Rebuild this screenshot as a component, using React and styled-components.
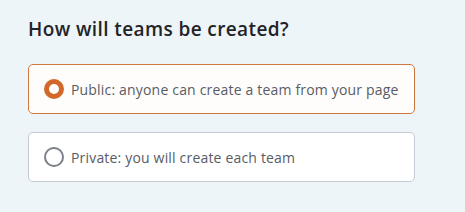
import React, { useState } from 'react';
import styled, { createGlobalStyle } from 'styled-components';

const GlobalStyle = createGlobalStyle`
  html, body {
    margin: 0;
    padding: 0;
    background: #eef5f8;
    font-family: "Open Sans", "Liberation Sans", sans-serif;
  }
`;

const Wrapper = styled.div`
  padding: 15px 50px 0 28px;
`;

const Heading = styled.h2`
  margin: 0 0 21px;
  font-size: 19px;
  line-height: 28px;
  font-weight: 600;
  letter-spacing: 0.4px;
  color: #1f2428;
`;

const Options = styled.div`
  display: flex;
  flex-direction: column;
  gap: 18px;
  width: 387px;
`;

const Option = styled.label`
  display: flex;
  align-items: center;
  gap: 7px;
  height: 50px;
  box-sizing: border-box;
  padding: 0 15px;
  background: ${p => (p.$selected ? '#fffdfb' : '#ffffff')};
  border: 1px solid ${p => (p.$selected ? '#d0773f' : '#c3cad2')};
  border-radius: 5px;
  cursor: pointer;
`;

const Radio = styled.span`
  width: 20px;
  height: 20px;
  box-sizing: border-box;
  border-radius: 50%;
  flex-shrink: 0;
  background: #fff;
  border: ${p => (p.$selected ? '5px solid #d2692a' : '2px solid #7c8089')};
`;

const Label = styled.span`
  font-size: 14px;
  letter-spacing: 0.18px;
  white-space: nowrap;
  color: #585c66;
`;

const options = [
  { id: 'public', text: 'Public: anyone can create a team from your page' },
  { id: 'private', text: 'Private: you will create each team' },
];

export default function App() {
  const [value, setValue] = useState('public');
  return (
    <Wrapper>
      <GlobalStyle />
      <Heading>How will teams be created?</Heading>
      <Options>
        {options.map(o => (
          <Option key={o.id} $selected={value === o.id} onClick={() => setValue(o.id)}>
            <Radio $selected={value === o.id} />
            <Label>{o.text}</Label>
          </Option>
        ))}
      </Options>
    </Wrapper>
  );
}
